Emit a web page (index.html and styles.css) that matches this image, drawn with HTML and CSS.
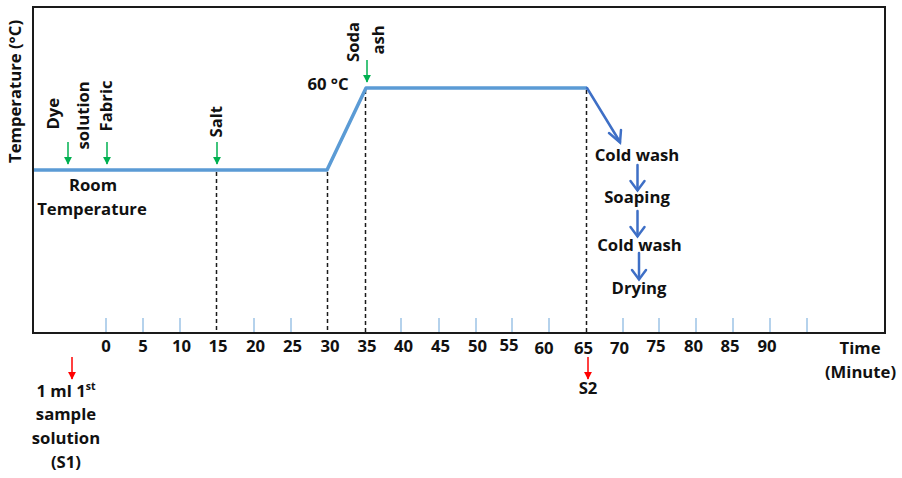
FILE: index.html
```html
<!DOCTYPE html>
<html lang="en">
<head>
<meta charset="utf-8">
<title>Dyeing process profile</title>
<link rel="stylesheet" href="styles.css">
</head>
<body>
<div class="chart">
<svg class="plot" width="902" height="478" viewBox="0 0 902 478" xmlns="http://www.w3.org/2000/svg">
  <defs>
    <marker id="headGreen" viewBox="0 0 10 10" refX="9" refY="5" markerWidth="5.5" markerHeight="5.5" orient="auto">
      <path d="M0,0 L10,5 L0,10 Z" class="fill-green"/>
    </marker>
    <marker id="headRed" viewBox="0 0 10 10" refX="9" refY="5" markerWidth="5.5" markerHeight="5.5" orient="auto">
      <path d="M0,0 L10,5 L0,10 Z" class="fill-red"/>
    </marker>
  </defs>

  <!-- frame -->
  <rect class="frame" x="33" y="7" width="852" height="326"/>

  <!-- ticks -->
  <g class="ticks">
    <line x1="106" y1="318" x2="106" y2="332"/>
    <line x1="143" y1="318" x2="143" y2="332"/>
    <line x1="180" y1="318" x2="180" y2="332"/>
    <line x1="254" y1="318" x2="254" y2="332"/>
    <line x1="291" y1="318" x2="291" y2="332"/>
    <line x1="401" y1="318" x2="401" y2="332"/>
    <line x1="439" y1="318" x2="439" y2="332"/>
    <line x1="476" y1="318" x2="476" y2="332"/>
    <line x1="512" y1="318" x2="512" y2="332"/>
    <line x1="549" y1="318" x2="549" y2="332"/>
    <line x1="623" y1="318" x2="623" y2="332"/>
    <line x1="659" y1="318" x2="659" y2="332"/>
    <line x1="696" y1="318" x2="696" y2="332"/>
    <line x1="733" y1="318" x2="733" y2="332"/>
    <line x1="770" y1="318" x2="770" y2="332"/>
    <line x1="807" y1="318" x2="807" y2="332"/>
  </g>

  <!-- dashed guides -->
  <g class="dash">
    <line x1="216.5" y1="172" x2="216.5" y2="332"/>
    <line x1="327.5" y1="172" x2="327.5" y2="332"/>
    <line x1="365.5" y1="90" x2="365.5" y2="332"/>
    <line x1="586.5" y1="90" x2="586.5" y2="332"/>
  </g>

  <!-- temperature profile -->
  <polyline class="profile" points="34,170 327,170 366,88 587,88"/>

  <!-- cooling & post-treatment arrows -->
  <g class="flow">
    <line x1="587" y1="88" x2="620" y2="142"/>
    <polyline points="609,133 620,142.5 621,130"/>
    <line x1="637.5" y1="165" x2="637.5" y2="190"/>
    <polyline points="630.5,181 637.5,190.5 644.5,181"/>
    <line x1="637.5" y1="211" x2="637.5" y2="236"/>
    <polyline points="630.5,227 637.5,236.5 644.5,227"/>
    <line x1="639" y1="253" x2="639" y2="279"/>
    <polyline points="632,270 639,279.5 646,270"/>
  </g>

  <!-- addition arrows -->
  <g class="arrow-green">
    <line x1="68" y1="142" x2="68" y2="164" marker-end="url(#headGreen)"/>
    <line x1="107" y1="142" x2="107" y2="164" marker-end="url(#headGreen)"/>
    <line x1="217" y1="142" x2="217" y2="164" marker-end="url(#headGreen)"/>
    <line x1="367" y1="60" x2="367" y2="82" marker-end="url(#headGreen)"/>
  </g>
  <g class="arrow-red">
    <line x1="72" y1="357" x2="72" y2="379" marker-end="url(#headRed)"/>
    <line x1="588" y1="357" x2="588" y2="379" marker-end="url(#headRed)"/>
  </g>

  <!-- vertical labels -->
  <g class="label">
    <text class="axis-title" transform="translate(21,163) rotate(-90)">Temperature (°C)</text>
    <text transform="translate(59,129.5) rotate(-90)">Dye</text>
    <text transform="translate(88.5,149.5) rotate(-90)">solution</text>
    <text transform="translate(112,131.5) rotate(-90)">Fabric</text>
    <text transform="translate(222,137.5) rotate(-90)">Salt</text>
    <text transform="translate(359,62) rotate(-90)">Soda</text>
    <text transform="translate(384,54.5) rotate(-90)">ash</text>
  </g>

  <!-- horizontal labels -->
  <g class="label mid">
    <text x="93" y="191">Room</text>
    <text x="92" y="215">Temperature</text>
    <text x="328" y="90">60 °C</text>
    <text x="637" y="161">Cold wash</text>
    <text x="637" y="203">Soaping</text>
    <text x="639.5" y="251">Cold wash</text>
    <text x="639" y="293.5">Drying</text>
    <text x="860" y="353.5">Time</text>
    <text x="860.5" y="377.5">(Minute)</text>
    <text x="588" y="393.5">S2</text>
    <text x="66" y="397">1 ml 1<tspan class="sup" dy="-7">st</tspan></text>
    <text x="66" y="420">sample</text>
    <text x="66" y="444">solution</text>
    <text x="66" y="468">(S1)</text>
  </g>

  <!-- tick labels -->
  <g class="label mid">
    <text x="106" y="352">0</text>
    <text x="143" y="352">5</text>
    <text x="181.5" y="352">10</text>
    <text x="218" y="352">15</text>
    <text x="255.5" y="352">20</text>
    <text x="292.5" y="352">25</text>
    <text x="330" y="352">30</text>
    <text x="367" y="352">35</text>
    <text x="403.5" y="352">40</text>
    <text x="440.5" y="352">45</text>
    <text x="477.5" y="352">50</text>
    <text x="509" y="351">55</text>
    <text x="544" y="353.5">60</text>
    <text x="583.5" y="353.5">65</text>
    <text x="619.5" y="354">70</text>
    <text x="656" y="352">75</text>
    <text x="693.5" y="352">80</text>
    <text x="730" y="352">85</text>
    <text x="767" y="352">90</text>
  </g>
</svg>
</div>
</body>
</html>
```

FILE: styles.css
```css
html, body {
  margin: 0;
  padding: 0;
  background: #ffffff;
}

.chart {
  width: 902px;
  height: 478px;
  overflow: hidden;
}

.plot {
  display: block;
}

.frame {
  fill: none;
  stroke: #1a1a1a;
  stroke-width: 2;
}

.ticks line {
  stroke: #9dc3e6;
  stroke-width: 1.5;
}

.dash line {
  stroke: #1a1a1a;
  stroke-width: 1.5;
  stroke-dasharray: 4 3;
}

.profile {
  fill: none;
  stroke: #5b9bd5;
  stroke-width: 3.5;
  stroke-linejoin: round;
}

.flow line,
.flow polyline {
  fill: none;
  stroke: #3e6fc6;
  stroke-width: 2.5;
  stroke-linecap: round;
  stroke-linejoin: miter;
}

.arrow-green line {
  stroke: #00b050;
  stroke-width: 1.5;
}

.arrow-red line {
  stroke: #ff0000;
  stroke-width: 1.5;
}

.fill-green { fill: #00b050; }
.fill-red { fill: #ff0000; }

.label text {
  font-family: "Open Sans", Lato, "Liberation Sans", sans-serif;
  font-weight: 700;
  font-size: 16.7px;
  fill: #111111;
}

.label.mid text {
  text-anchor: middle;
}

.label .sup {
  font-size: 10.5px;
}
```
